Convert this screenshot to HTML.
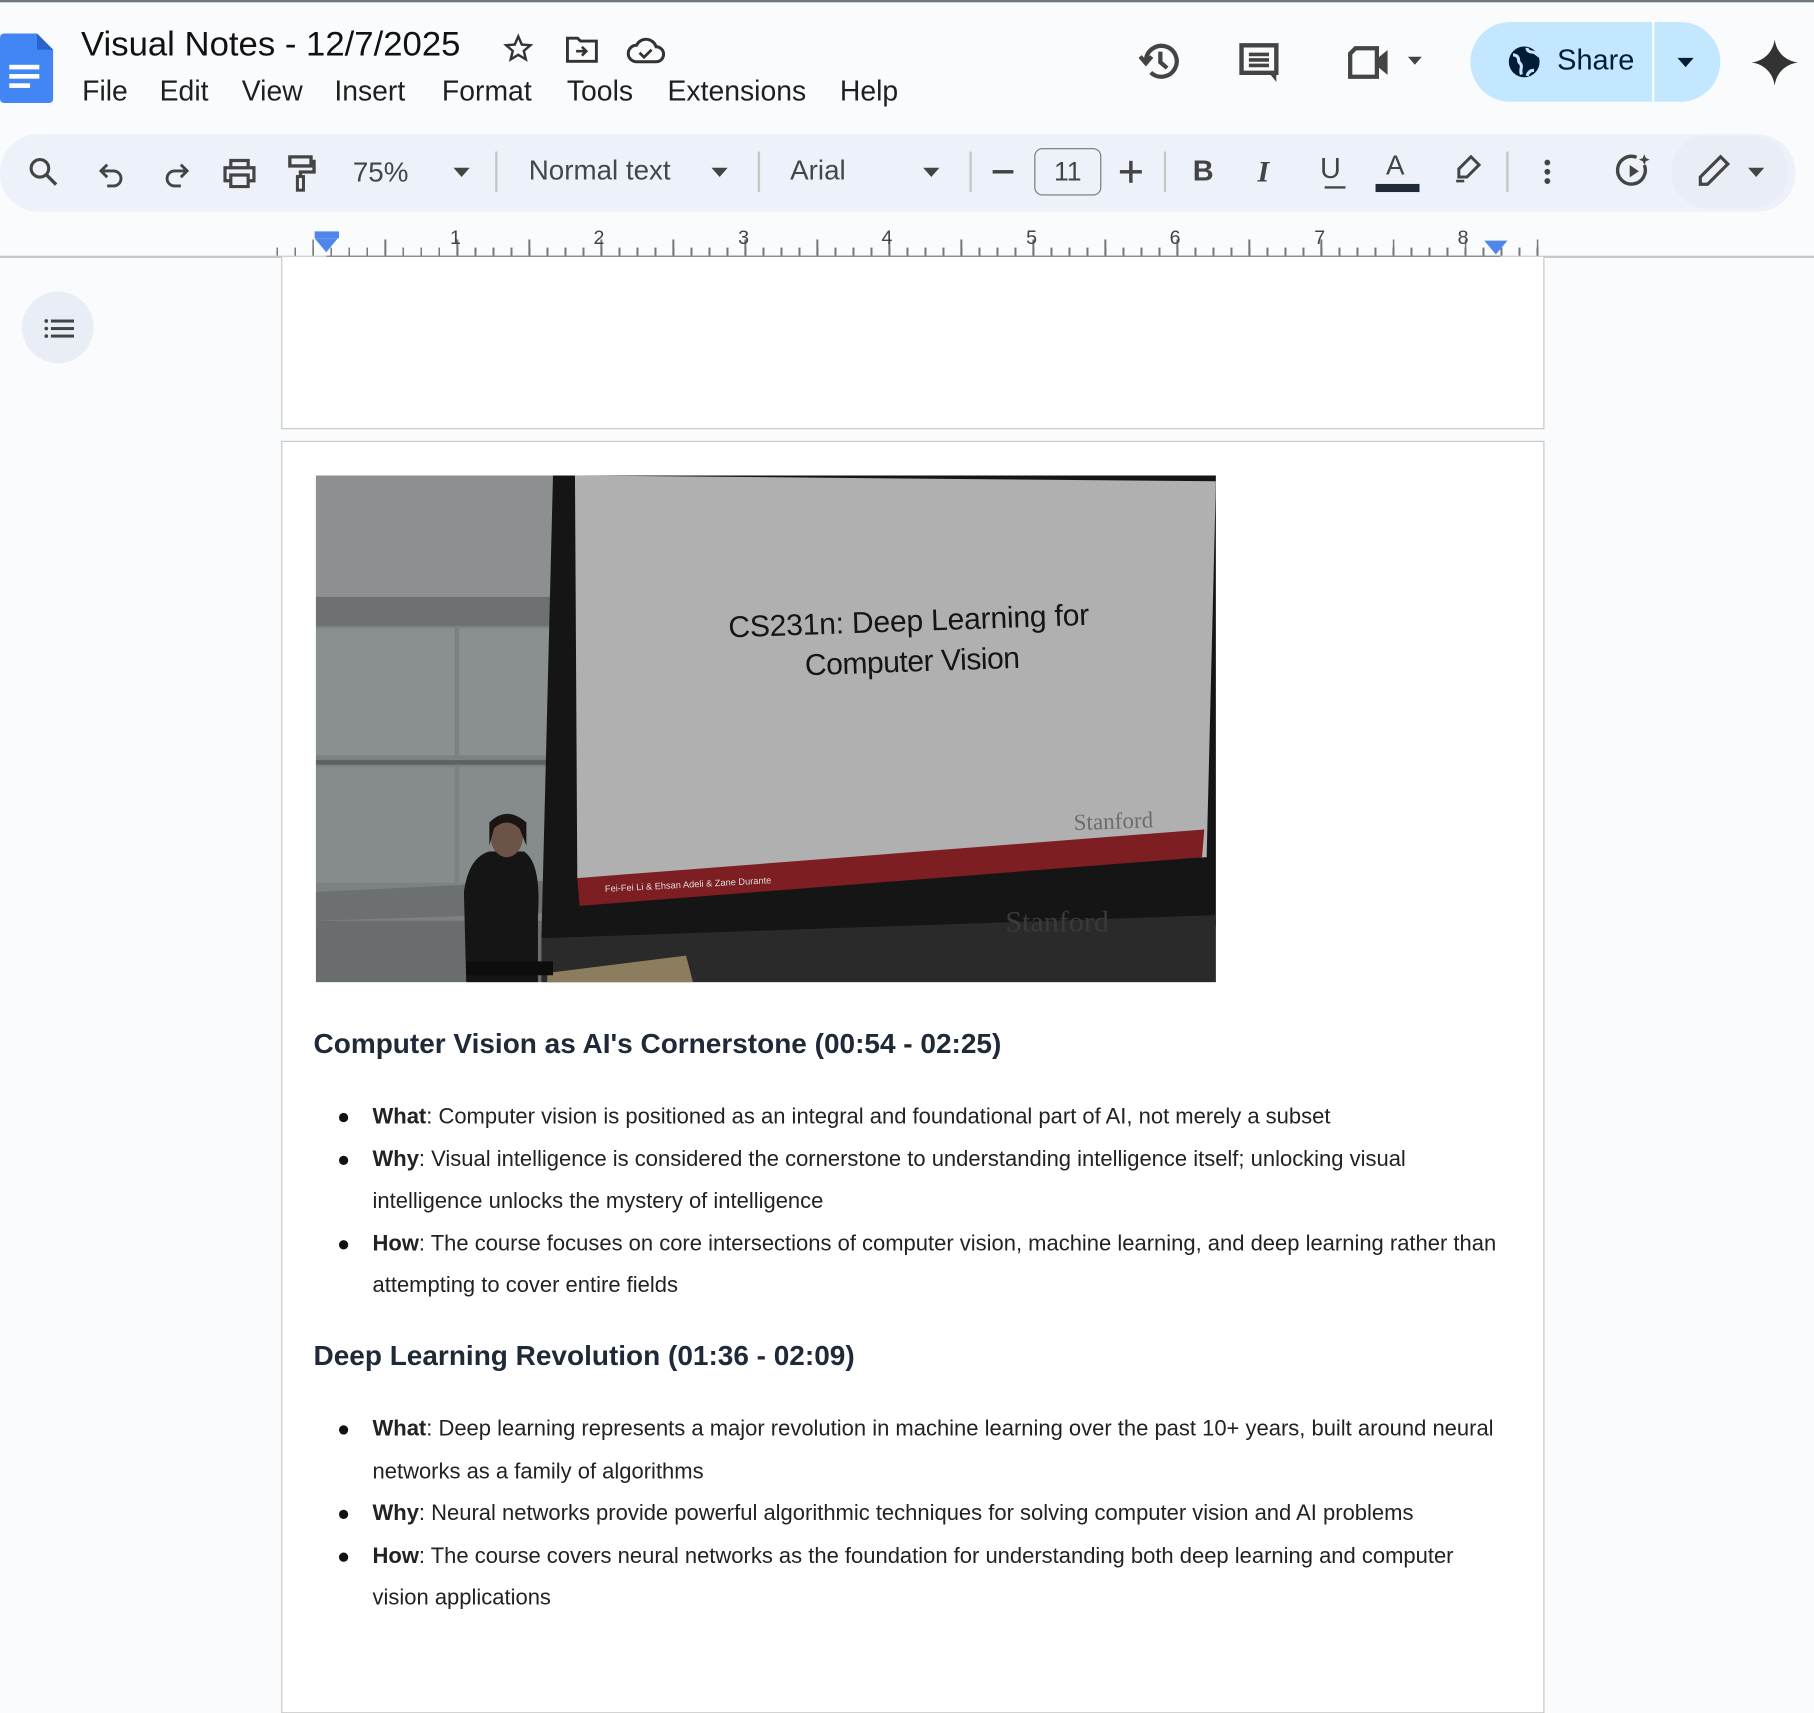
<!DOCTYPE html>
<html><head><meta charset="utf-8"><style>
*{box-sizing:border-box;margin:0;padding:0}
html,body{width:1814px;height:1680px;overflow:hidden;background:#f9fbfd}
#w{position:absolute;left:0;top:0;width:1568px;height:1452px;transform:scale(1.15689);transform-origin:0 0;font-family:"Liberation Sans",Arial,sans-serif;color:#1f1f1f}
.a{position:absolute}
.menu span{position:absolute;top:0}
.tb{color:#444746}
.hd{font-weight:bold;font-size:24.2px;color:#1f2937;position:absolute;left:271px}
ul{position:absolute;left:322px;list-style:none;font-size:19px;line-height:36.5px;color:#222;width:978px}
ul li{position:relative}
ul li:before{content:"";position:absolute;left:-29px;top:14px;width:8px;height:8px;border-radius:50%;background:#111}
</style></head><body><div id="w">
<div class="a" style="left:0;top:0;width:1568px;height:2px;background:#6f787e"></div>
<svg class="a" style="left:0;top:29px" width="46" height="60" viewBox="0 0 46 60"><path d="M4 0H32L46 14V56Q46 60 42 60H4Q0 60 0 56V4Q0 0 4 0Z" fill="#4285f4"/><path d="M32 0V14H46Z" fill="#2a63c9"/><rect x="8" y="27" width="26" height="4" fill="#fff"/><rect x="8" y="35" width="26" height="4" fill="#fff"/><rect x="8" y="43" width="18" height="4" fill="#fff"/></svg>
<div class="a" style="left:70px;top:22px;font-size:30px;color:#111">Visual Notes - 12/7/2025</div>
<svg class="a" style="left:434px;top:28px" width="28" height="28" viewBox="0 0 24 24"><path d="M12 3l2.6 6 6.4.5-4.9 4.2 1.5 6.3L12 16.6 6.4 20l1.5-6.3L3 9.5l6.4-.5z" fill="none" stroke="#333" stroke-width="1.8"/></svg>
<svg class="a" style="left:488px;top:30px" width="30" height="26" viewBox="0 0 24 20"><path d="M2 2h7l2 2h11v14H2z" fill="none" stroke="#333" stroke-width="2"/><path d="M8 11h7M12 8l3 3-3 3" fill="none" stroke="#333" stroke-width="1.8"/></svg>
<svg class="a" style="left:541px;top:30px" width="34" height="26" viewBox="0 0 26 20"><path d="M7 18h13a5 5 0 0 0 0-10 7 7 0 0 0-13-1A5.5 5.5 0 0 0 7 18z" fill="none" stroke="#333" stroke-width="2"/><path d="M9 12l3 3 5-5" fill="none" stroke="#333" stroke-width="1.8"/></svg>
<div class="a menu" style="left:0;top:66px;font-size:24.5px;color:#1f1f1f;width:800px;height:30px"><span style="left:71px">File</span><span style="left:138px">Edit</span><span style="left:209px">View</span><span style="left:289px">Insert</span><span style="left:382px">Format</span><span style="left:490px">Tools</span><span style="left:577px">Extensions</span><span style="left:726px">Help</span></div>
<svg class="a" style="left:983px;top:33px" width="40" height="40" viewBox="0 0 24 24"><path d="M4.5 12a8 8 0 1 1 2.5 5.8" fill="none" stroke="#444" stroke-width="2.2"/><path d="M1.5 9.5l3 3.5 3-3.5" fill="none" stroke="#444" stroke-width="2.2"/><path d="M12 7v5.5l3.5 3" fill="none" stroke="#444" stroke-width="2.2"/></svg>
<svg class="a" style="left:1070px;top:36px" width="38" height="38" viewBox="0 0 24 24"><path d="M2 2h19v15H2z" fill="none" stroke="#444" stroke-width="2.4"/><path d="M17 17h4v5z" fill="#444"/><path d="M6 7h11M6 10h11M6 13h11" stroke="#444" stroke-width="2"/></svg>
<svg class="a" style="left:1164px;top:38px" width="40" height="32" viewBox="0 0 26 20"><path d="M5 2h12v16H2V5z" fill="none" stroke="#444" stroke-width="2.4"/><path d="M17 8l6-5v14l-6-5z" fill="#444"/></svg>
<div class="a" style="left:1217px;top:49px;border:6px solid transparent;border-top:7px solid #444"></div>
<div class="a" style="left:1271px;top:19px;width:216px;height:69px;border-radius:35px;background:#c2e7ff"></div>
<div class="a" style="left:1428px;top:19px;width:2px;height:69px;background:#f9fbfd"></div>
<svg class="a" style="left:1303px;top:39px" width="29" height="29" viewBox="0 0 24 24"><circle cx="12" cy="12" r="11" fill="#001d35"/><path d="M4 7c3 0 4 2 4 4s2 2 2 4-1 3 0 6M14 2c0 2 2 3 4 3s3 2 5 3M14 22c1-3 3-4 5-4" fill="none" stroke="#c2e7ff" stroke-width="2.2"/></svg>
<div class="a" style="left:1346px;top:38px;font-size:25px;color:#001d35">Share</div>
<div class="a" style="left:1450px;top:50px;border:7px solid transparent;border-top:8px solid #001d35"></div>
<svg class="a" style="left:1514px;top:34px" width="40" height="40" viewBox="0 0 24 24"><path d="M12 0C12.8 6.5 17.5 11.2 24 12 17.5 12.8 12.8 17.5 12 24 11.2 17.5 6.5 12.8 0 12 6.5 11.2 11.2 6.5 12 0z" fill="#333"/></svg>
<div class="a" style="left:0;top:116px;width:1552px;height:67px;border-radius:33px;background:#edf2fa"></div>
<svg class="a" style="left:24px;top:135px" width="28" height="28" viewBox="0 0 24 24"><circle cx="9" cy="9" r="6.5" fill="none" stroke="#444" stroke-width="2.3"/><path d="M14 14l7 7" stroke="#444" stroke-width="2.5"/></svg>
<svg class="a" style="left:84px;top:138px" width="26" height="26" viewBox="0 0 24 24"><path d="M8 4L3 9l5 5" fill="none" stroke="#444" stroke-width="2.3"/><path d="M3 9h10a6 6 0 0 1 0 12H8" fill="none" stroke="#444" stroke-width="2.3"/></svg>
<svg class="a" style="left:139px;top:138px" width="26" height="26" viewBox="0 0 24 24"><path d="M16 4l5 5-5 5" fill="none" stroke="#444" stroke-width="2.3"/><path d="M21 9H11a6 6 0 0 0 0 12h5" fill="none" stroke="#444" stroke-width="2.3"/></svg>
<svg class="a" style="left:192px;top:135px" width="30" height="30" viewBox="0 0 24 24"><path d="M6 8V3h12v5M6 17H2V8h20v9h-4" fill="none" stroke="#444" stroke-width="2.2"/><path d="M6 13h12v8H6z" fill="none" stroke="#444" stroke-width="2.2"/></svg>
<svg class="a" style="left:246px;top:133px" width="30" height="34" viewBox="0 0 22 26"><path d="M3 2h14v6H3zM17 5h2v7h-9v3" fill="none" stroke="#444" stroke-width="2.2"/><rect x="8" y="15" width="4" height="9" fill="none" stroke="#444" stroke-width="2"/></svg>
<div class="a tb" style="left:305px;top:136px;font-size:24px">75%</div>
<div class="a" style="left:392px;top:145px;border:7px solid transparent;border-top:8px solid #444"></div>
<div class="a" style="left:428px;top:131px;width:2px;height:35px;background:#c4c7c5"></div>
<div class="a tb" style="left:457px;top:134px;font-size:24px">Normal text</div>
<div class="a" style="left:615px;top:145px;border:7px solid transparent;border-top:8px solid #444"></div>
<div class="a" style="left:655px;top:131px;width:2px;height:35px;background:#c4c7c5"></div>
<div class="a tb" style="left:683px;top:134px;font-size:24px">Arial</div>
<div class="a" style="left:798px;top:145px;border:7px solid transparent;border-top:8px solid #444"></div>
<div class="a" style="left:838px;top:131px;width:2px;height:35px;background:#c4c7c5"></div>
<div class="a" style="left:858px;top:147px;width:18px;height:3px;background:#444"></div>
<div class="a" style="left:894px;top:128px;width:58px;height:41px;border:1.5px solid #747775;border-radius:7px;font-size:23px;text-align:center;line-height:39px;color:#444">11</div>
<div class="a" style="left:968px;top:147px;width:19px;height:3px;background:#444"></div>
<div class="a" style="left:976px;top:139px;width:3px;height:19px;background:#444"></div>
<div class="a" style="left:1006px;top:131px;width:2px;height:35px;background:#c4c7c5"></div>
<div class="a" style="left:1031px;top:134px;font-size:25px;font-weight:bold;color:#444">B</div>
<div class="a" style="left:1087px;top:134px;font-size:26px;font-style:italic;font-family:'Liberation Serif',serif;font-weight:bold;color:#444">I</div>
<div class="a" style="left:1141px;top:132px;font-size:25px;color:#444">U</div>
<div class="a" style="left:1145px;top:161px;width:18px;height:2px;background:#444"></div>
<div class="a" style="left:1198px;top:130px;font-size:24px;color:#444">A</div>
<div class="a" style="left:1189px;top:159px;width:38px;height:7px;background:#1f2937"></div>
<svg class="a" style="left:1254px;top:132px" width="28" height="28" viewBox="0 0 24 24"><path d="M15 3l6 6-9 9H6v-6z" fill="none" stroke="#444" stroke-width="2.2"/><path d="M4 21h6" stroke="#444" stroke-width="2"/></svg>
<div class="a" style="left:1302px;top:131px;width:2px;height:35px;background:#c4c7c5"></div>
<div class="a" style="left:1335px;top:138px;width:5px;height:5px;border-radius:50%;background:#444;box-shadow:0 8px 0 #444,0 16px 0 #444"></div>
<svg class="a" style="left:1396px;top:132px" width="32" height="32" viewBox="0 0 24 24"><path d="M19 8a9 9 0 1 1-5-5" fill="none" stroke="#444" stroke-width="2.2"/><path d="M9.5 8v8l6-4z" fill="#444"/><path d="M19 1l1 2.5 2.5 1-2.5 1L19 8l-1-2.5-2.5-1 2.5-1z" fill="#444"/></svg>
<div class="a" style="left:1445px;top:117px;width:100px;height:63px;border-radius:30px;background:#e9eef6"></div>
<svg class="a" style="left:1466px;top:133px" width="30" height="30" viewBox="0 0 24 24"><path d="M17 2l5 5L8 21H3v-5z" fill="none" stroke="#444" stroke-width="2.2"/></svg>
<div class="a" style="left:1511px;top:145px;border:7px solid transparent;border-top:8px solid #444"></div>
<div class="a" style="left:237px;top:214px;width:1093px;height:8px;background:repeating-linear-gradient(90deg,#777 0 1.5px,transparent 1.5px 15.56px);background-position:2px 0"></div>
<div class="a" style="left:239px;top:207px;width:1093px;height:15px;background:repeating-linear-gradient(90deg,#777 0 1.5px,transparent 1.5px 62.25px);background-position:31px 0"></div>
<div class="a" style="left:0;top:221px;width:1568px;height:2px;background:#c7c7c7"></div>
<div class="a" style="left:282px;top:221px;width:1015px;height:2px;background:#777"></div>
<div class="a" style="left:270px;top:196px;width:1060px;height:16px;font-size:17px;color:#444"><span class="a" style="left:119px">1</span><span class="a" style="left:243px">2</span><span class="a" style="left:368px">3</span><span class="a" style="left:492px">4</span><span class="a" style="left:617px">5</span><span class="a" style="left:741px">6</span><span class="a" style="left:866px">7</span><span class="a" style="left:990px">8</span></div>
<div class="a" style="left:272px;top:200px;width:21px;height:6px;background:#4f86ec"></div>
<div class="a" style="left:272px;top:206px;border-left:10.5px solid transparent;border-right:10.5px solid transparent;border-top:12px solid #4f86ec"></div>
<div class="a" style="left:1283px;top:208px;border-left:10.5px solid transparent;border-right:10.5px solid transparent;border-top:12px solid #4f86ec"></div>
<div class="a" style="left:19px;top:252px;width:62px;height:62px;border-radius:50%;background:#e9eef6"></div>
<svg class="a" style="left:38px;top:275px" width="26" height="18" viewBox="0 0 26 18"><g fill="#444"><circle cx="2" cy="2.5" r="1.6"/><circle cx="2" cy="9" r="1.6"/><circle cx="2" cy="15.5" r="1.6"/><rect x="6" y="1.2" width="20" height="2.6"/><rect x="6" y="7.7" width="20" height="2.6"/><rect x="6" y="14.2" width="20" height="2.6"/></g></svg>
<div class="a" style="left:243px;top:222px;width:1092px;height:149px;background:#fff;border:1.5px solid #c7c7c7;border-top:none"></div>
<div class="a" style="left:243px;top:381px;width:1092px;height:1100px;background:#fff;border:1.5px solid #c7c7c7"></div>
<svg class="a" style="left:273px;top:411px" width="778" height="438" viewBox="0 0 778 438">
<rect width="778" height="438" fill="#7d8182"/>
<rect x="0" y="0" width="210" height="105" fill="#8d9091"/>
<rect x="0" y="105" width="210" height="25" fill="#6d7172"/>
<rect x="0" y="132" width="120" height="110" fill="#8a8f90"/><rect x="124" y="132" width="86" height="110" fill="#8a8f90"/>
<rect x="0" y="246" width="210" height="4" fill="#5e6263"/>
<rect x="0" y="252" width="120" height="100" fill="#868b8c"/><rect x="124" y="252" width="86" height="100" fill="#868b8c"/>
<polygon points="0,360 210,350 210,378 0,385" fill="#6c7071"/>
<rect x="0" y="385" width="210" height="53" fill="#6a6d6e"/>
<polygon points="205,0 778,0 778,390 195,400" fill="#151515"/>
<polygon points="224,0 778,5 770,330 226,348" fill="#b0b0b0"/>
<polygon points="226,348 768,306 766,330 228,372" fill="#7c1e22"/>
<polygon points="195,400 778,380 778,438 195,438" fill="#2a2a2a"/>
<polygon points="200,430 320,415 326,438 200,438" fill="#8b7d5e"/>
<path d="M130 438 L128 360 Q132 330 150 325 L180 325 Q195 335 192 380 L192 438Z" fill="#151515"/>
<ellipse cx="165" cy="312" rx="14" ry="18" fill="#6b5347"/>
<path d="M150 300 Q165 285 182 300 L182 320 L176 305 Q165 295 154 305 L150 320Z" fill="#1a1412"/>
<rect x="130" y="420" width="75" height="12" fill="#0d0d0d"/>
<text x="357" y="135" font-family="Liberation Sans,Arial,sans-serif" font-size="26" fill="#151515" textLength="312" transform="rotate(-2 500 140)">CS231n: Deep Learning for</text>
<text x="423" y="170" font-family="Liberation Sans,Arial,sans-serif" font-size="26" fill="#151515" textLength="186" transform="rotate(-2 500 170)">Computer Vision</text>
<text x="655" y="305" font-family="Liberation Serif,serif" font-size="20" fill="#6d6d6d" transform="rotate(-2 700 300)">Stanford</text>
<text x="250" y="360" font-family="Liberation Sans,Arial,sans-serif" font-size="8" fill="#ddd" transform="rotate(-3 250 360)">Fei-Fei Li &amp; Ehsan Adeli &amp; Zane Durante</text>
<text x="596" y="394" font-family="Liberation Serif,serif" font-size="26" fill="#3a3a3a">Stanford</text>
</svg>
<div class="hd" style="top:889px">Computer Vision as AI's Cornerstone (00:54 - 02:25)</div>
<ul style="top:948px">
<li><b>What</b>: Computer vision is positioned as an integral and foundational part of AI, not merely a subset</li>
<li><b>Why</b>: Visual intelligence is considered the cornerstone to understanding intelligence itself; unlocking visual intelligence unlocks the mystery of intelligence</li>
<li><b>How</b>: The course focuses on core intersections of computer vision, machine learning, and deep learning rather than attempting to cover entire fields</li>
</ul>
<div class="hd" style="top:1159px">Deep Learning Revolution (01:36 - 02:09)</div>
<ul style="top:1218px">
<li><b>What</b>: Deep learning represents a major revolution in machine learning over the past 10+ years, built around neural networks as a family of algorithms</li>
<li><b>Why</b>: Neural networks provide powerful algorithmic techniques for solving computer vision and AI problems</li>
<li><b>How</b>: The course covers neural networks as the foundation for understanding both deep learning and computer vision applications</li>
</ul>
</div></body></html>
